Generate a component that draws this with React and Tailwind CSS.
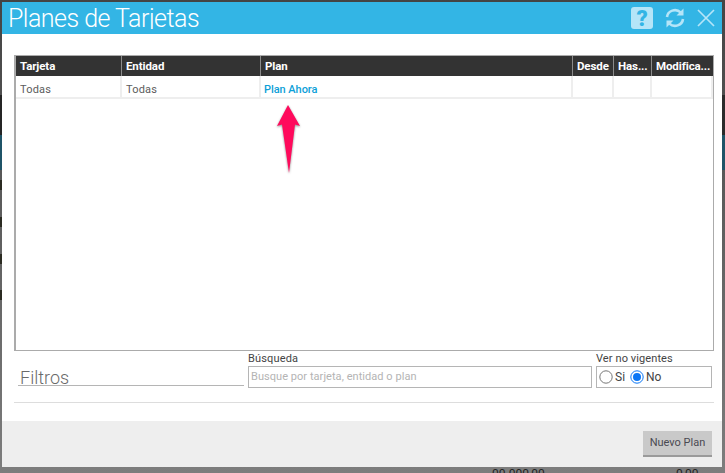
import React from "react";

const cols = "grid-cols-[106px_139px_312px_41px_38px_61px]";

function HeadCell({ children, last }) {
  return (
    <div className={`h-full pl-[4px] pt-[2px] flex items-center text-white font-bold text-[11.5px] tracking-[-0.1px] overflow-hidden whitespace-nowrap ${last ? "" : "border-r border-r-[#8a8a8a]"}`}>
      {children}
    </div>
  );
}

function BodyCell({ children, link }) {
  return (
    <div className={`h-full pt-[6px] flex items-center text-[11px] border-r-2 border-r-[#eeeeee] ${link ? "pl-[3px] text-[#0d9fd8] font-medium tracking-[-0.05px]" : "pl-[4px] text-[#5c5c5c] tracking-[0.2px]"}`}>
      {children}
    </div>
  );
}

function Radio({ checked }) {
  return (
    <svg width="14" height="14" viewBox="0 0 14 14" className="shrink-0">
      <circle cx="7" cy="7" r="6.2" fill="#fff" stroke={checked ? "#0a76f6" : "#767676"} strokeWidth="1" />
      {checked && <circle cx="7" cy="7" r="4" fill="#0a76f6" />}
    </svg>
  );
}

export default function App() {
  return (
    <div
      className="relative w-[725px] h-[473px] overflow-hidden pt-[2px] pl-[2px] bg-gradient-to-b from-[#444444] to-[#7d7d7d]"
      style={{ fontFamily: "Roboto, 'Noto Sans', sans-serif" }}
    >
      <div className="absolute left-0 top-[95px] w-[2px] h-[40px] bg-[#252525]" />
      <div className="absolute left-0 top-[135px] w-[2px] h-[35px] bg-[#1f5468]" />
      <div className="absolute left-0 top-[180px] w-[2px] h-[10px] bg-[#2b2b22]" />
      <div className="absolute left-0 top-[217px] w-[2px] h-[10px] bg-[#2b2b22]" />
      <div className="absolute left-0 top-[254px] w-[2px] h-[10px] bg-[#2b2b22]" />
      <div className="absolute left-0 top-[290px] w-[2px] h-[10px] bg-[#2b2b22]" />
      <div className="absolute right-0 top-[95px] w-[3px] h-[40px] bg-[#2b2b2b]" />
      <div className="absolute right-0 top-[135px] w-[3px] h-[35px] bg-[#1f5468]" />
      <div className="absolute left-[492px] bottom-[-7px] text-[12px] text-[#222] leading-[12px]">00.000,00</div>
      <div className="absolute left-[676px] bottom-[-7px] text-[12px] text-[#222] leading-[12px]">0,00</div>

      <div className="relative z-10 w-[720px] h-[465px] bg-white flex flex-col">
        <header className="h-[32px] shrink-0 bg-[#33b5e5] flex items-start justify-between overflow-hidden pl-[6px] pr-[7px]">
          <h1 className="text-[25px] leading-[33px] font-light text-white tracking-[-0.52px] h-[27px] overflow-hidden">Planes de Tarjetas</h1>
          <div className="flex items-center gap-[12px] pt-[5px]">
            <svg width="22" height="22" viewBox="0 0 22 22">
              <rect x="0" y="0" width="22" height="22" rx="3" fill="#b5e5f8" />
              <text x="11" y="19" textAnchor="middle" fontSize="22" fontWeight="900" fill="#33b5e5" fontFamily="Roboto">?</text>
            </svg>
            <svg width="20" height="20" viewBox="0 0 20 20" fill="none" stroke="#b5e5f8" strokeWidth="2.6">
              <path d="M2 9 A8 7.6 0 0 1 15.6 4.4" />
              <path d="M18 11 A8 7.6 0 0 1 4.4 15.6" />
              <path d="M18.5 0.5 V7.5 H11.5 Z" fill="#b5e5f8" stroke="none" />
              <path d="M1.5 19.5 V12.5 H8.5 Z" fill="#b5e5f8" stroke="none" />
            </svg>
            <svg width="18" height="18" viewBox="0 0 18 18" stroke="#b5e5f8" strokeWidth="1.7">
              <path d="M1 1 L17 17 M17 1 L1 17" />
            </svg>
          </div>
        </header>

        <main className="flex-1 flex flex-col pl-[12px] pr-[8px] pt-[21px]">
          <div className="h-[296px] w-[700px] border border-[#ababab] border-l-2 bg-white">
            <div className={`grid ${cols} h-[20px] bg-[#333333]`}>
              <HeadCell>Tarjeta</HeadCell>
              <HeadCell>Entidad</HeadCell>
              <HeadCell>Plan</HeadCell>
              <HeadCell>Desde</HeadCell>
              <HeadCell>Has...</HeadCell>
              <HeadCell last>Modifica...</HeadCell>
            </div>
            <div className={`grid ${cols} h-[23px] border-b-2 border-b-[#eeeeee]`}>
              <BodyCell>Todas</BodyCell>
              <BodyCell>Todas</BodyCell>
              <BodyCell link>Plan Ahora</BodyCell>
              <BodyCell />
              <BodyCell />
              <BodyCell />
            </div>
          </div>

          <div className="flex items-end h-[37px]">
            <div className="w-[226px] ml-[4px] h-[22px] border-b border-b-[#b5b5b5] text-[18px] font-light text-[#6a6a6a] leading-[28px] pl-[2px] mb-[2px] whitespace-nowrap">
              Filtros
            </div>
            <div className="ml-[4px] w-[344px] flex flex-col">
              <label className="text-[11px] leading-[15px] text-[#444444] tracking-[0.15px]">Búsqueda</label>
              <div className="h-[22px] border border-[#b5b5b5] flex items-center pl-[2px] text-[11px] text-[#b4b4b4] tracking-[0.05px]">
                Busque por tarjeta, entidad o plan
              </div>
            </div>
            <div className="ml-[4px] w-[116px] flex flex-col">
              <label className="text-[11px] leading-[15px] text-[#444444] tracking-[0.1px]">Ver no vigentes</label>
              <div className="h-[22px] border border-[#b5b5b5] flex items-center pl-[2px] text-[12px] text-[#444444]">
                <Radio />
                <span className="ml-[2px]">Si</span>
                <span className="ml-[5px] flex"><Radio checked /></span>
                <span className="ml-[2px]">No</span>
              </div>
            </div>
          </div>

          <div className="h-px w-[700px] bg-[#dddddd] mt-[14px]" />
        </main>

        <footer className="h-[46px] shrink-0 bg-[#eeeeee] flex justify-end items-start pt-[10px] pr-[10px]">
          <button className="w-[69px] h-[26px] bg-[#c9c9c9] text-[#4a4a52] text-[11px] border-b-2 border-b-[#9a9a9a] flex items-center justify-center">
            Nuevo Plan
          </button>
        </footer>

        <svg className="absolute left-[270px] top-[99px]" width="34" height="76" viewBox="0 0 34 76">
          <path d="M16 4 L5 25 L10 23.5 L17 72 L23 23.5 L28 25 Z" fill="#ff0a5c" style={{ filter: "drop-shadow(0 1px 1px rgba(0,0,0,.45))" }} />
        </svg>
      </div>
    </div>
  );
}
